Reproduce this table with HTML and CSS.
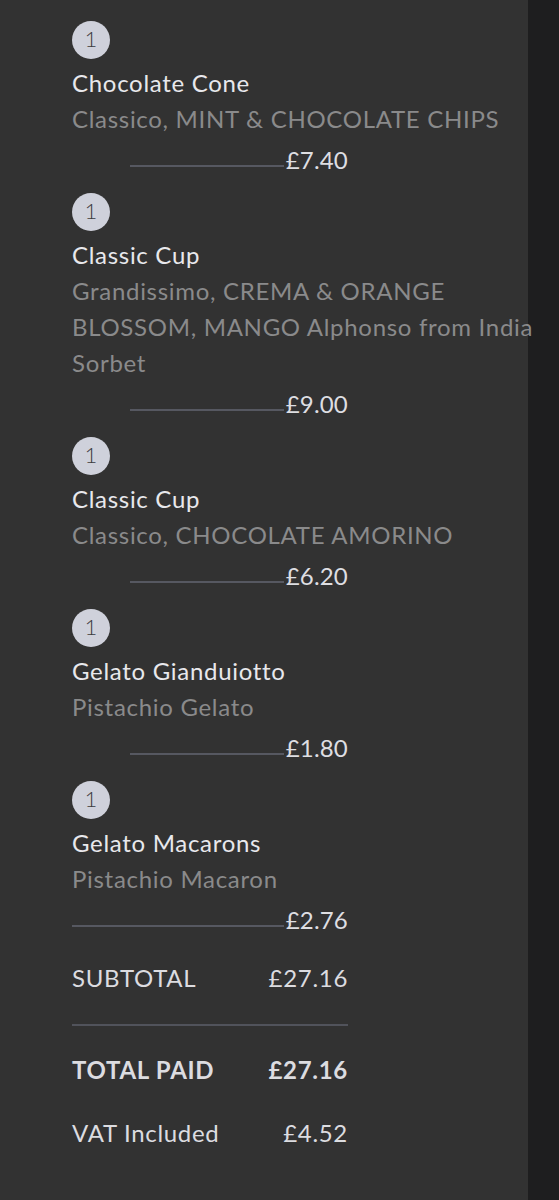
FILE: index.html
```html
<!DOCTYPE html>
<html lang="en">
<head>
    <meta charset="UTF-8">
    <meta name="viewport" content="width=device-width, initial-scale=1.0">
    <title>Receipt</title>
    <link rel="stylesheet" href="styles.css">
</head>
<body>
    <div class="page">
        <div class="receipt">
            <div class="item">
                <div class="qty">1</div>
                <div class="name">Chocolate Cone</div>
                <div class="desc">Classico, MINT &amp; CHOCOLATE CHIPS</div>
                <div class="price-row"><span class="rule"></span><span class="price">£7.40</span></div>
            </div>
            <div class="item">
                <div class="qty">1</div>
                <div class="name">Classic Cup</div>
                <div class="desc">Grandissimo, CREMA &amp; ORANGE BLOSSOM, MANGO Alphonso from India Sorbet</div>
                <div class="price-row"><span class="rule"></span><span class="price">£9.00</span></div>
            </div>
            <div class="item">
                <div class="qty">1</div>
                <div class="name">Classic Cup</div>
                <div class="desc">Classico, CHOCOLATE AMORINO</div>
                <div class="price-row"><span class="rule"></span><span class="price">£6.20</span></div>
            </div>
            <div class="item">
                <div class="qty">1</div>
                <div class="name">Gelato Gianduiotto</div>
                <div class="desc">Pistachio Gelato</div>
                <div class="price-row"><span class="rule"></span><span class="price">£1.80</span></div>
            </div>
            <div class="item">
                <div class="qty">1</div>
                <div class="name">Gelato Macarons</div>
                <div class="desc">Pistachio Macaron</div>
                <div class="price-row full"><span class="rule"></span><span class="price">£2.76</span></div>
            </div>

            <div class="sum-row subtotal"><span>SUBTOTAL</span><span>£27.16</span></div>
            <div class="divider"></div>
            <div class="sum-row total"><span>TOTAL PAID</span><span>£27.16</span></div>
            <div class="sum-row vat"><span>VAT Included</span><span>£4.52</span></div>
        </div>
    </div>
</body>
</html>
```

FILE: styles.css
```css
body {
	margin: 0;
	background-color: #323232;
	font-family: Lato, "Open Sans", sans-serif;
	font-size: 24px;
	line-height: 36px;
	letter-spacing: 0.7px;
}
/* dark strip on the right edge */
.page {
	min-height: 1200px;
	background: linear-gradient(to right, #323232 528px, #1e1e1f 528px);
}
.receipt {
	width: 528px;
	box-sizing: border-box;
	padding: 21px 0 0 72px;
}
.item {
	margin-bottom: 15px;
}
.qty {
	width: 38px;
	height: 38px;
	border-radius: 50%;
	background-color: #cfd1db;
	color: #3c3c3e;
	font-size: 22px;
	font-weight: 300;
	line-height: 36px;
	letter-spacing: 0;
	text-align: center;
}
.name {
	margin-top: 6px;
	color: #e8e8ec;
}
.desc {
	width: 472px;
	color: #8a8a8b;
}
.price-row {
	display: flex;
	align-items: center;
	width: 218px;
	margin-top: 5px;
	padding-left: 58px;
}
.price-row.full {
	padding-left: 0;
	width: 276px;
}
.rule {
	flex: 1;
	height: 2px;
	margin-top: 11px;
	margin-right: 2px;
	background-color: #565861;
}
.price {
	color: #dedee2;
	letter-spacing: 0.2px;
}
.sum-row {
	display: flex;
	justify-content: space-between;
	width: 276px;
	color: #dcdce0;
}
.subtotal {
	margin-top: 22px;
}
.divider {
	width: 276px;
	height: 2px;
	margin-top: 28px;
	background-color: #51535b;
}
.total {
	margin-top: 26px;
	font-weight: 700;
}
.vat {
	margin-top: 27px;
}
```
